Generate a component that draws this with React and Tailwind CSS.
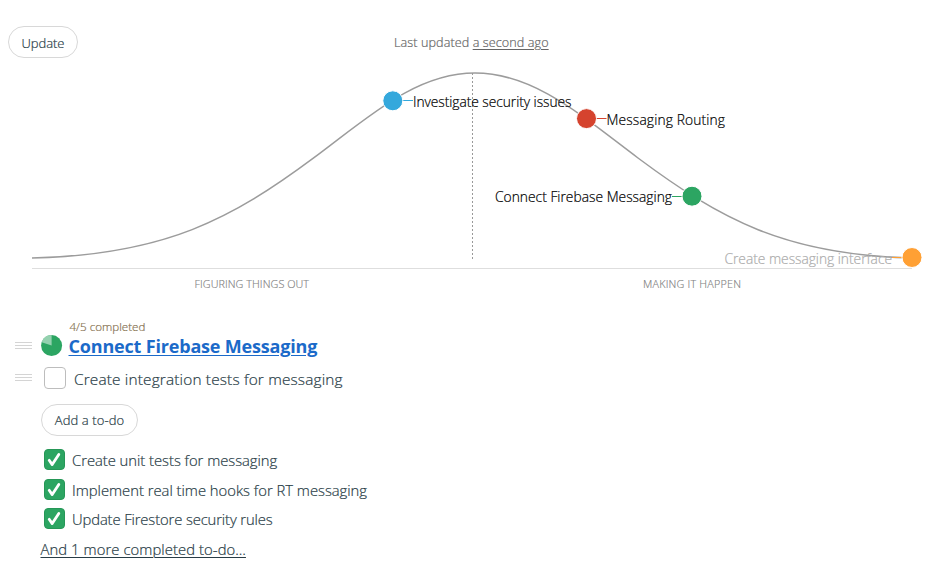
const points = [
  { label: 'Investigate security issues', x: 392.8, y: 100.8, color: '#34a8dc', side: 'right', textX: 413, width: 158.5, baseline: 106.5, text: '#000' },
  { label: 'Messaging Routing', x: 586.5, y: 118.6, color: '#d5432e', side: 'right', textX: 606.5, width: 118.5, baseline: 124.5, text: '#000' },
  { label: 'Connect Firebase Messaging', x: 692, y: 196.2, color: '#2ca562', side: 'left', textX: 495, width: 177, baseline: 201.5, text: '#000' },
  { label: 'Create messaging interface', x: 912, y: 257.5, color: '#ffa034', side: 'left', textX: 724.5, width: 167.5, baseline: 263.5, text: '#acacac' },
];

function HillChart() {
  return (
    <svg className="block h-[242px] w-[942px]" viewBox="0 58 942 242">
      <path
        d="M32 258 C165 255 232 218.7 314 157.7 C370 116 416 73 475 73 C534 73 582 116 638 158 C720 219 785 255 912 258"
        fill="none"
        stroke="#9c9c9c"
        strokeWidth="1.5"
      />
      <path d="M472.5 73V260" stroke="#999" strokeWidth="1" strokeDasharray="2 2" />
      <path d="M32 268.5H912" stroke="#dedede" strokeWidth="1" />
      {points.map((p) => (
        <g key={p.label}>
          <path
            d={p.side === 'right' ? `M${p.x + 9} ${Math.floor(p.y) + 0.5}H${p.textX}` : `M${p.textX + p.width} ${Math.floor(p.y) + 0.5}H${p.x - 9}`}
            stroke={p.color}
            strokeWidth="1"
          />
          <circle cx={p.x} cy={p.y} r="10" fill={p.color} stroke="#fff" strokeWidth="1" />
          <text x={p.textX} y={p.baseline} fontSize="13.8" textLength={p.width} fill={p.text} stroke={p.text} strokeWidth="0.2">
            {p.label}
          </text>
        </g>
      ))}
      <text x="194.5" y="288" fontSize="10.8" textLength="114.5" fill="#808080" stroke="#808080" strokeWidth="0.15">FIGURING THINGS OUT</text>
      <text x="643" y="288" fontSize="10.8" textLength="98" fill="#808080" stroke="#808080" strokeWidth="0.15">MAKING IT HAPPEN</text>
    </svg>
  );
}

function DragHandle() {
  return (
    <span className="flex h-[7px] w-[17px] shrink-0 flex-col justify-between">
      <span className="h-px bg-[#d4d4d4]" />
      <span className="h-px bg-[#d4d4d4]" />
      <span className="h-px bg-[#d4d4d4]" />
    </span>
  );
}

function Progress() {
  return (
    <svg className="size-[22px] shrink-0" viewBox="0 0 22 22">
      <circle cx="10.6" cy="10.6" r="10.5" fill="#2ca562" />
      <path d="M10.6 10.6V0.1A10.5 10.5 0 0 0 0.61 7.35Z" fill="#94d1af" />
    </svg>
  );
}

function Done({ label, className }) {
  return (
    <li className={`flex items-start ${className}`}>
      <svg className="size-[21px] shrink-0" viewBox="0 0 21 21">
        <rect x="0.5" y="0.5" width="20" height="20" rx="3.5" fill="#2ca562" stroke="#269757" />
        <path d="M5.2 11.3L8.2 15.6L14.8 5.4" fill="none" stroke="#fff" strokeWidth="2.8" strokeLinecap="round" strokeLinejoin="round" />
      </svg>
      <span className="ml-[7px] mt-px text-[14.8px] leading-[21px] whitespace-nowrap">{label}</span>
    </li>
  );
}

export default function App() {
  return (
    <main className='h-[570px] w-[942px] overflow-hidden bg-white font-["Open_Sans","Noto_Sans",sans-serif] font-light text-[#283c46] [-webkit-text-stroke-width:0.2px]'>
      <header className="flex h-[58px] items-start pl-2 pt-[26px]">
        <button className="h-8 w-[70px] rounded-full border border-[#d8d8d8] pt-[3px] text-[13px] tracking-[-0.05px]">Update</button>
        <p className="ml-[316px] mt-[8px] text-[12.6px] leading-[18px] tracking-[0.09px] whitespace-nowrap text-[#666]">
          Last updated <a className="underline underline-offset-2">a second ago</a>
        </p>
      </header>
      <HillChart />
      <section className="pl-[15px] pt-[20px]">
        <p className="ml-[54.5px] h-[14px] text-[11.6px] leading-[14px] text-[#86714f]">4/5 completed</p>
        <div className="flex h-[24px] items-center">
          <span className="mb-0.5"><DragHandle /></span>
          <span className="ml-[9px] flex"><Progress /></span>
          <h2 className="ml-[5.5px] text-[18px] leading-6 font-bold tracking-[-0.18px] whitespace-nowrap text-[#1b6ac9] underline decoration-1 underline-offset-2 [-webkit-text-stroke-width:0px]">
            Connect Firebase Messaging
          </h2>
        </div>
        <div className="mt-[9px] flex h-[22px] items-start">
          <span className="mt-[7px]"><DragHandle /></span>
          <span className="ml-3 size-[22px] shrink-0 rounded-[4px] border border-[#bdbdbd]" />
          <span className="ml-2 mt-0.5 text-[15.4px] leading-[22px] tracking-[0.16px] whitespace-nowrap">Create integration tests for messaging</span>
        </div>
        <button className="mt-[15px] ml-[26px] block h-8 w-[97px] rounded-full border border-[#d8d8d8] pt-0.5 text-[13px] tracking-[0.1px]">Add a to-do</button>
        <ul className="mt-[13px] ml-[29px]">
          <Done label="Create unit tests for messaging" className="h-[30px] tracking-[-0.03px]" />
          <Done label="Implement real time hooks for RT messaging" className="h-[29px] tracking-[-0.01px]" />
          <Done label="Update Firestore security rules" className="h-[30px] tracking-[-0.12px]" />
        </ul>
        <a className="ml-[25.5px] block w-fit text-[14.8px] leading-[22px] tracking-[0.08px] whitespace-nowrap underline decoration-1 underline-offset-2">
          And 1 more completed to-do…
        </a>
      </section>
    </main>
  );
}
